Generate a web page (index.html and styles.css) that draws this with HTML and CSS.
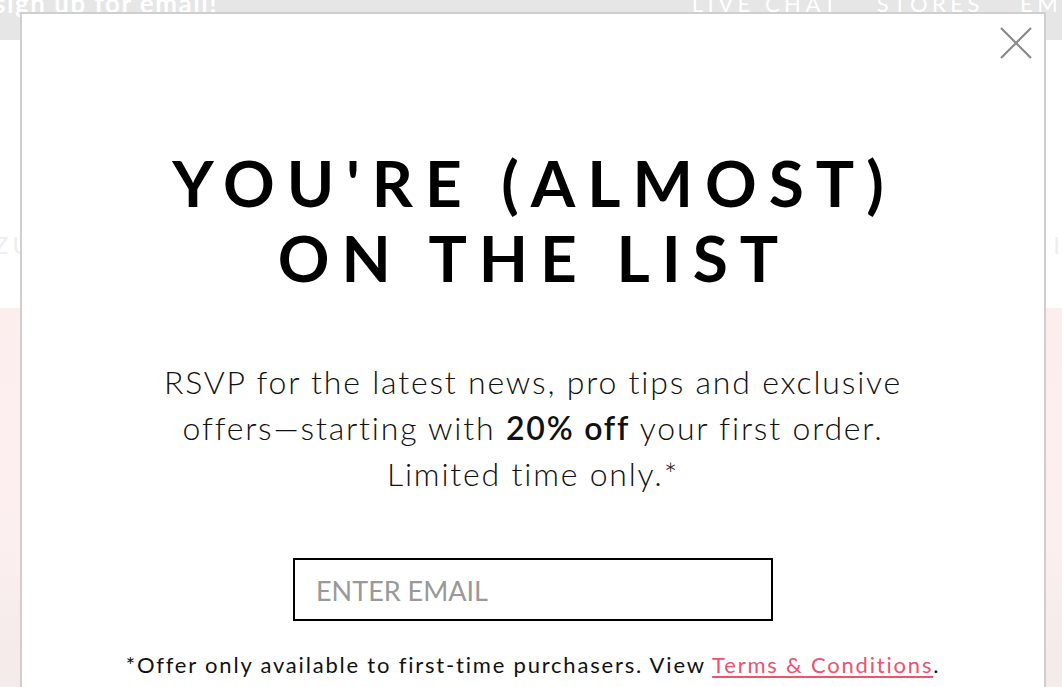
FILE: index.html
```html
<!DOCTYPE html>
<html>
<head>
<meta charset="utf-8">
<link rel="stylesheet" href="styles.css">
</head>
<body>
<div class="page">
  <div class="topbar">
    <span class="signup">sign up for email!</span>
    <nav class="toplinks"><span>LIVE CHAT</span><span>STORES</span><span>EMAIL</span></nav>
  </div>
  <div class="navrow">
    <span class="navleft">ZU</span>
    <span class="navright">I</span>
  </div>
  <div class="hero"></div>
</div>

<div class="modal">
  <button class="close" aria-label="Close">
    <svg width="34" height="34" viewBox="0 0 34 34"><path d="M2 2 L32 32 M32 2 L2 32" stroke="#8a8a8a" stroke-width="2.2" fill="none"/></svg>
  </button>
  <h1 class="title">YOU'RE (ALMOST)<br>ON THE LIST</h1>
  <p class="lead">RSVP for the latest news, pro tips and exclusive<br>offers—starting with <strong>20% off</strong> your first order.<br>Limited time only.*</p>
  <div class="field"><input type="email" placeholder="ENTER EMAIL"></div>
  <p class="fine">*Offer only available to first-time purchasers. View <a href="#">Terms &amp; Conditions</a>.</p>
</div>
</body>
</html>
```

FILE: styles.css
```css
* { box-sizing: border-box; }
html, body { margin: 0; padding: 0; height: 100%; overflow: hidden; background: #fff; }
body { font-family: Lato, "Liberation Sans", sans-serif; }

.page { height: 687px; display: flex; flex-direction: column; }
.topbar {
  height: 40px; background: #e6e6e6; display: flex; justify-content: space-between;
  align-items: flex-start; overflow: hidden; color: #fff;
}
.signup { font-size: 26px; font-weight: 700; letter-spacing: 1.5px; margin-top: -13px; margin-left: -6px; }
.toplinks { display: flex; gap: 36px; font-size: 22px; letter-spacing: 4.5px; margin-top: -10px; margin-right: -46px; flex-shrink: 0; }
.navrow { height: 268px; display: flex; justify-content: space-between; align-items: flex-start; padding-top: 190px; color: #eee; font-size: 24px; }
.navleft { margin-left: -6px; letter-spacing: 4px; }
.navright { margin-right: 2px; }
.hero { flex: 1; background: linear-gradient(180deg, #fdeeee 0%, #fcefef 60%, #f3eaea 100%); }

.modal {
  position: absolute; left: 20px; top: 12px; width: 1026px; height: 720px;
  background: #fff; border: 2px solid #cfcfcf; border-bottom: none;
  display: flex; flex-direction: column; align-items: center;
  padding-top: 131px;
}
.close {
  position: absolute; right: 11px; top: 12px; background: none; border: 0; padding: 0; width: 34px; height: 34px; cursor: pointer;
}
.close svg { display: block; }
.title {
  margin: 0; font-size: 64px; font-weight: 700; letter-spacing: 12px; line-height: 75px;
  text-align: center; color: #000; padding-left: 12px; margin-left: -10px;
}
.lead {
  margin: 64px 0 0; text-align: center; font-size: 32px; font-weight: 300;
  line-height: 46px; letter-spacing: 1.8px; color: #111;
}
.lead strong { font-weight: 600; }
.field { margin-top: 61px; }
.field input {
  display: block; width: 480px; height: 63px; border: 2px solid #000; padding: 2px 21px 0;
  font-family: Lato, "Liberation Sans", sans-serif; font-size: 27px; color: #111; outline: none;
}
.field input::placeholder { color: #999; }
.fine { margin: 30px 0 0; font-size: 22px; letter-spacing: 1.8px; color: #111; font-weight: 400; }
.fine a { color: #f2506c; text-decoration: underline; text-underline-offset: 3px; }
```
